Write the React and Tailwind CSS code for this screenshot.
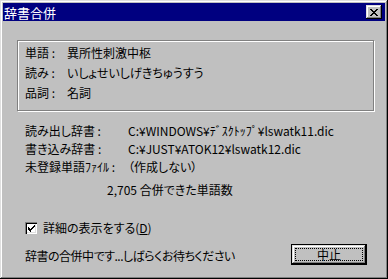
import React from 'react';

const font = { fontFamily: '"Noto Sans CJK JP", "Liberation Sans", sans-serif' };

const raised =
  'shadow-[inset_-1px_-1px_#000,inset_1px_1px_#dfdfdf,inset_-2px_-2px_#808080,inset_2px_2px_#fff]';

const CloseButton = () => (
  <div className={`w-[16px] h-[14px] bg-[#c0c0c0] flex items-center justify-center ${raised}`}>
    <svg width="8" height="7" viewBox="0 0 8 7" shapeRendering="crispEdges">
      <path d="M0 0h2v1h-2zM6 0h2v1h-2zM1 1h2v1h-2zM5 1h2v1h-2zM2 2h4v1h-4zM3 3h2v1h-2zM2 4h4v1h-4zM1 5h2v1h-2zM5 5h2v1h-2zM0 6h2v1h-2zM6 6h2v1h-2z" fill="#000" />
    </svg>
  </div>
);

const WordRow = ({ label, value }) => (
  <div className="flex items-center h-[20px]">
    <span className="w-[42px]">{label}</span>
    <span>{value}</span>
  </div>
);

const PathRow = ({ label, value }) => (
  <div className="flex items-center h-[18px]">
    <span className="w-[103px] whitespace-nowrap">{label}</span>
    <span className="whitespace-nowrap">{value}</span>
  </div>
);

export default function App() {
  return (
    <div
      className={`w-[388px] h-[279px] bg-[#c0c0c0] p-[3px] flex flex-col text-[12px] text-black [font-feature-settings:'palt'] ${raised}`}
      style={font}
    >
      {/* title bar */}
      <div className="h-[18px] bg-[#000080] flex items-center justify-between pl-[1px] pr-[3px]">
        <span className="text-white text-[13px] leading-none">辞書合併</span>
        <CloseButton />
      </div>

      <div className="pl-[14px] pr-[11px] flex flex-col">
        {/* word group */}
        <div className="mt-[19px] h-[71px] border border-[#808080] shadow-[inset_1px_1px_#fff,1px_1px_#fff] pt-[2px] pl-[7px]">
          <WordRow label="単語 :" value="異所性刺激中枢" />
          <WordRow label="読み :" value="いしょせいしげきちゅうすう" />
          <WordRow label="品詞 :" value="名詞" />
        </div>

        {/* dictionaries */}
        <div className="mt-[11px] pl-[8px]">
          <PathRow label="読み出し辞書 :" value="C:¥WINDOWS¥ﾃﾞｽｸﾄｯﾌﾟ¥lswatk11.dic" />
          <PathRow label="書き込み辞書 :" value="C:¥JUST¥ATOK12¥lswatk12.dic" />
          <PathRow label="未登録単語ﾌｧｲﾙ :" value="（作成しない）" />
        </div>

        <div className="mt-[5px] h-[18px] flex items-center pl-[90px]">
          2,705 合併できた単語数
        </div>

        {/* checkbox */}
        <div className="mt-[20px] h-[18px] flex items-center pl-[8px] gap-[6px]">
          <div className="w-[12px] h-[12px] bg-white shadow-[inset_1px_1px_#808080,inset_2px_2px_#000,inset_-1px_-1px_#fff,inset_-2px_-2px_#dfdfdf] flex items-center justify-center">
            <svg width="7" height="7" viewBox="0 0 7 7" shapeRendering="crispEdges">
              <path d="M6 0h1v1h-1zM5 1h2v1h-2zM0 2h1v1h-1zM4 2h2v1h-2zM0 3h2v1h-2zM3 3h2v1h-2zM0 4h4v1h-4zM1 5h2v1h-2zM2 6h1v1h-1z" fill="#000" />
            </svg>
          </div>
          <span>
            詳細の表示をする(<span className="underline">D</span>)
          </span>
        </div>

        {/* status + button */}
        <div className="mt-[7px] flex items-center justify-between pl-[8px]">
          <span className="mt-[2px] tracking-[-0.5px]">辞書の合併中です...しばらくお待ちください</span>
          <div className="w-[76px] h-[21px] border border-black mr-[7px]">
            <div className={`w-full h-full bg-[#c0c0c0] p-[3px] ${raised}`}>
              <div className="w-full h-full border border-dotted border-black flex items-center justify-center leading-none">
                中止
              </div>
            </div>
          </div>
        </div>
      </div>
    </div>
  );
}
